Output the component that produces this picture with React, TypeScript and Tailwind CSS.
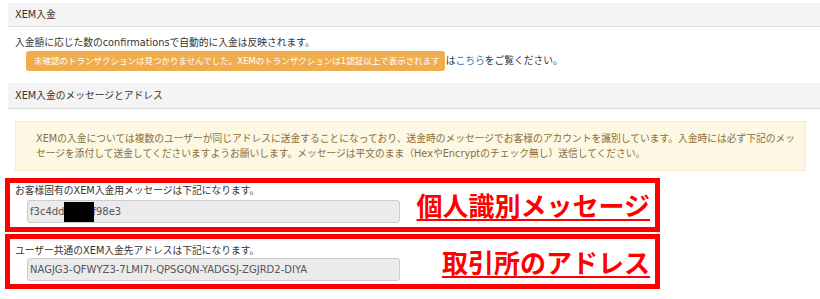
export default function App() {
  return (
    <div className="w-[820px] h-[299px] overflow-hidden bg-white pt-[3px] font-['DejaVu_Sans','Noto_Sans_CJK_JP',sans-serif] text-[9.75px] text-[#333]">
      <div className="ml-[8px]">
        <div className="flex h-[24px] items-center border-b border-[#dddddd] bg-[#f4f4f4] pl-[7px] leading-[12px]">
          XEM入金
        </div>
        <div className="mt-[10px] pl-[7px] leading-[12px]">
          入金額に応じた数のconfirmationsで自動的に入金は反映されます。
        </div>
        <div className="mt-[2px] flex items-center leading-[12px]">
          <div className="ml-[18px] flex h-[20px] items-center rounded-[3px] bg-[#f0ad4e] pl-[8px] pr-[5px] text-[8.5px] text-white">
            未確認のトランザクションは見つかりませんでした。XEMのトランザクションは1認証以上で表示されます
          </div>
          <div className="pl-[1px]">
            は<span className="text-[#337ab7]">こちら</span>をご覧ください。
          </div>
        </div>
        <div className="mt-[12px] flex h-[26px] items-center border-b border-[#dddddd] bg-[#f4f4f4] pl-[7px] leading-[12px]">
          XEM入金のメッセージとアドレス
        </div>
        <div className="ml-[7px] mt-[12px] w-[791px] border border-[#faebcc] bg-[#fcf8e3] py-[9px] pl-[20px] pr-[6px] leading-[15px] text-[#8a6d3b]">
          XEMの入金については複数のユーザーが同じアドレスに送金することになっており、送金時のメッセージでお客様のアカウントを識別しています。入金時には必ず下記のメッセージを添付して送金してくださいますようお願いします。メッセージは平文のまま（HexやEncryptのチェック無し）送信してください。
        </div>
      </div>

      <div className="ml-[5px] mt-[7px] flex h-[54px] w-[655px] items-center justify-between border-[5px] border-[#ff0000]">
        <div className="self-start pl-[5px] pt-[2px]">
          <div className="leading-[12px]">お客様固有のXEM入金用メッセージは下記になります。</div>
          <div className="ml-[12px] mt-[3px] flex h-[23px] w-[373px] items-center rounded-[3px] border border-[#cccccc] bg-[#ebebeb] pl-[2px] text-[10px] text-[#555]">
            <span>f3c4dd</span>
            <span className="relative z-10 -mr-[2px] inline-block h-[20px] w-[30px] bg-black" />
            <span>f98e3</span>
          </div>
        </div>
        <div className="pr-[5px] font-['Noto_Sans_CJK_JP',sans-serif] text-[26px] font-bold leading-[30px] text-[#ff0000] underline decoration-2 underline-offset-[3px]">
          個人識別メッセージ
        </div>
      </div>

      <div className="ml-[5px] mt-[2px] flex h-[55px] w-[655px] items-center justify-between border-[5px] border-[#ff0000]">
        <div className="self-start pl-[5px] pt-[6px]">
          <div className="leading-[12px]">ユーザー共通のXEM入金先アドレスは下記になります。</div>
          <div className="ml-[12px] mt-[1px] flex h-[23px] w-[373px] items-center rounded-[3px] border border-[#cccccc] bg-[#ebebeb] pl-[2px] text-[10px] text-[#555]">
            NAGJG3-QFWYZ3-7LMI7I-QPSGQN-YADGSJ-ZGJRD2-DIYA
          </div>
        </div>
        <div className="pr-[5px] font-['Noto_Sans_CJK_JP',sans-serif] text-[26px] font-bold leading-[30px] text-[#ff0000] underline decoration-2 underline-offset-[3px]">
          取引所のアドレス
        </div>
      </div>
    </div>
  );
}
